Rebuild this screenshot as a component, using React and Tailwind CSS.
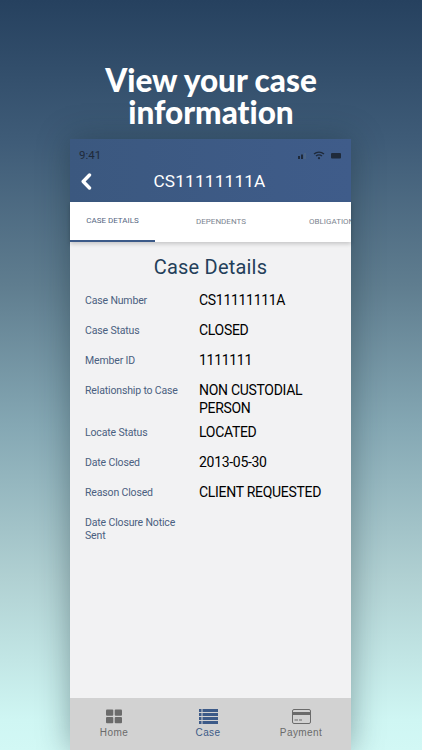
const rows = [
  ["Case Number", "CS11111111A"],
  ["Case Status", "CLOSED"],
  ["Member ID", "1111111"],
  ["Relationship to Case", "NON CUSTODIAL PERSON"],
  ["Locate Status", "LOCATED"],
  ["Date Closed", "2013-05-30"],
  ["Reason Closed", "CLIENT REQUESTED"],
  ["Date Closure Notice Sent", ""],
];

function GridIcon() {
  return (
    <svg width="16" height="15" viewBox="0 0 16 15" fill="#6b6b6b">
      <rect x="0" y="0.5" width="7.3" height="6.3" rx="1" />
      <rect x="8.7" y="0.5" width="7.3" height="6.3" rx="1" />
      <rect x="0" y="8" width="7.3" height="6.3" rx="1" />
      <rect x="8.7" y="8" width="7.3" height="6.3" rx="1" />
    </svg>
  );
}

function ListIcon() {
  return (
    <svg width="19" height="15" viewBox="0 0 19 15" fill="#3c5a88">
      <rect x="0" y="0" width="2.5" height="3" />
      <rect x="0" y="4" width="2.5" height="3" />
      <rect x="0" y="8" width="2.5" height="3" />
      <rect x="0" y="12" width="2.5" height="3" />
      <rect x="3.5" y="0" width="15.5" height="3" />
      <rect x="3.5" y="4" width="15.5" height="3" />
      <rect x="3.5" y="8" width="15.5" height="3" />
      <rect x="3.5" y="12" width="15.5" height="3" />
    </svg>
  );
}

function CardIcon() {
  return (
    <svg width="19" height="15" viewBox="0 0 19 15" fill="none">
      <rect x="0.5" y="0.5" width="18" height="14" rx="1.5" stroke="#6b6b6b" />
      <rect x="1" y="3" width="17" height="3" fill="#6b6b6b" />
      <rect x="2.5" y="10.5" width="3.5" height="1" fill="#6b6b6b" />
      <rect x="7" y="10.5" width="3" height="1" fill="#6b6b6b" />
    </svg>
  );
}

export default function App() {
  return (
    <div className="h-[750px] w-[422px] overflow-hidden bg-[linear-gradient(to_bottom,#26415f_0%,#3f5c78_19%,#5f7d8f_38%,#85a8b4_57%,#b0d0d2_77%,#cff6f3_96%,#d2f8f5_100%)] font-['Roboto',sans-serif]">
      <h1 className="pt-[64px] pb-[11px] text-center font-['Lato',sans-serif] text-[31.5px] leading-[32px] font-black text-white [font-variant-ligatures:none]">
        View your case
        <br />
        information
      </h1>

      <div className="ml-[70px] flex h-[611px] w-[281px] flex-col bg-[#f2f2f3] shadow-[0_0_30px_rgba(20,40,50,0.4)]">
        <div className="h-[63px] bg-[linear-gradient(to_right,#3b587f,#3f5c8a)] px-[9px] pt-[9px]">
          <div className="flex h-[14px] items-center justify-between">
            <span className="pt-[1px] text-[11.5px] text-[#1f2a3a]">9:41</span>
            <svg width="44" height="9" viewBox="0 0 44 9">
              <rect x="0" y="5" width="2" height="3" fill="#1f2a3a" />
              <rect x="3" y="3.5" width="2" height="4.5" fill="#1f2a3a" />
              <rect x="6" y="2" width="2" height="6" fill="#4b6484" />
              <path d="M16 3 A8 8 0 0 1 26 3" stroke="#1f2a3a" strokeWidth="1.4" fill="none" />
              <path d="M18 5 A5 5 0 0 1 24 5" stroke="#1f2a3a" strokeWidth="1.4" fill="none" />
              <circle cx="21" cy="7.2" r="1.1" fill="#1f2a3a" />
              <rect x="33" y="2" width="10" height="5.5" rx="1" fill="#1f2a3a" />
            </svg>
          </div>
          <div className="relative mt-[3px] flex h-[34px] items-center justify-center pr-[2px] text-[17.2px] tracking-[0.2px] text-white">
            <svg width="12" height="17" viewBox="0 0 12 17" className="absolute left-[1px] top-[8px]">
              <path d="M9.5 2 L3.2 8.5 L9.5 15" stroke="white" strokeWidth="3.4" fill="none" strokeLinecap="round" strokeLinejoin="round" />
            </svg>
            CS11111111A
          </div>
        </div>

        <div className="z-10 flex h-[40px] overflow-hidden bg-white text-[8px] whitespace-nowrap shadow-[0_2px_4px_rgba(0,0,0,0.18)]">
          <div className="flex h-full w-[85px] shrink-0 items-center justify-center border-b-[2px] border-[#3c5a88] text-[#56667f]">
            CASE DETAILS
          </div>
          <div className="flex h-full w-[132px] shrink-0 items-center justify-center text-[#7d8591]">
            DEPENDENTS
          </div>
          <div className="flex h-full shrink-0 items-center pl-[22px] text-[#7d8591]">
            OBLIGATIONS
          </div>
        </div>

        <h2 className="pt-[12px] pb-[11px] text-center text-[20px] leading-[26px] tracking-[0.2px] text-[#243f5a]">
          Case Details
        </h2>

        <div className="grid flex-1 grid-cols-[114px_1fr] content-start pl-[15px] pr-[10px]">
          {rows.map(([label, value]) => (
            <div key={label} className="col-span-2 grid min-h-[30px] grid-cols-subgrid pb-[6px]">
              <span className="pt-[3px] pr-[12px] text-[10.5px] leading-[13px] tracking-[-0.15px] text-[#4a6080]">{label}</span>
              <span className="text-[14px] leading-[18px] tracking-[-0.3px] text-black">{value}</span>
            </div>
          ))}
        </div>

        <nav className="flex h-[52px] bg-[#d2d2d2] pt-[11px] font-['Liberation_Sans',sans-serif] text-[10px] leading-[12px] tracking-[0.4px] text-[#6b6b6b]">
          <div className="flex w-[88px] flex-col items-center gap-[3px]">
            <GridIcon />
            Home
          </div>
          <div className="flex w-[100px] flex-col items-center gap-[3px] text-[#3c5a88]">
            <ListIcon />
            Case
          </div>
          <div className="flex w-[86px] flex-col items-center gap-[3px]">
            <CardIcon />
            Payment
          </div>
        </nav>
      </div>
    </div>
  );
}
